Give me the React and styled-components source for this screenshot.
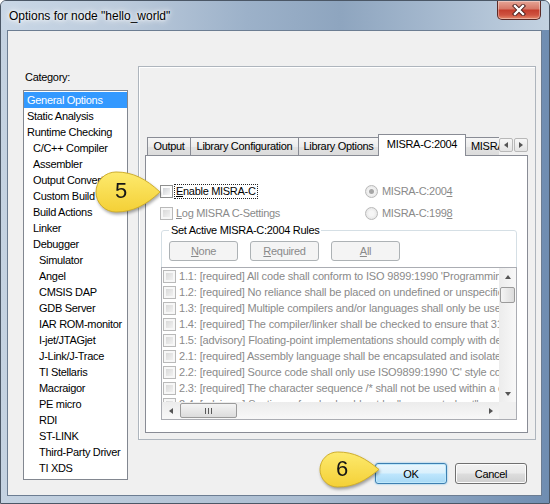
import React from 'react';
import styled, { createGlobalStyle, css } from 'styled-components';

const GlobalStyle = createGlobalStyle`
  html, body {
    margin: 0;
    padding: 0;
    background: #ffffff;
  }
  * {
    box-sizing: border-box;
  }
`;

const categories = [
  ['General Options', 0, true],
  ['Static Analysis', 0],
  ['Runtime Checking', 0],
  ['C/C++ Compiler', 1],
  ['Assembler', 1],
  ['Output Converter', 1],
  ['Custom Build', 1],
  ['Build Actions', 1],
  ['Linker', 1],
  ['Debugger', 1],
  ['Simulator', 2],
  ['Angel', 2],
  ['CMSIS DAP', 2],
  ['GDB Server', 2],
  ['IAR ROM-monitor', 2],
  ['I-jet/JTAGjet', 2],
  ['J-Link/J-Trace', 2],
  ['TI Stellaris', 2],
  ['Macraigor', 2],
  ['PE micro', 2],
  ['RDI', 2],
  ['ST-LINK', 2],
  ['Third-Party Driver', 2],
  ['TI XDS', 2]
];

const tabs = [
  { label: 'Output', width: 44 },
  { label: 'Library Configuration', width: 109 },
  { label: 'Library Options', width: 81 },
  { label: 'MISRA-C:2004', width: 88, active: true },
  { label: 'MISRA-C:1998', width: 44, clipped: true }
];

const rules = [
  "1.1: [required] All code shall conform to ISO 9899:1990 'Programming languages - C'",
  '1.2: [required] No reliance shall be placed on undefined or unspecified behaviour',
  '1.3: [required] Multiple compilers and/or languages shall only be used if',
  '1.4: [required] The compiler/linker shall be checked to ensure that 31 character',
  '1.5: [advisory] Floating-point implementations should comply with defined standard',
  '2.1: [required] Assembly language shall be encapsulated and isolated',
  "2.2: [required] Source code shall only use ISO9899:1990 'C' style comments",
  '2.3: [required] The character sequence /* shall not be used within a comment',
  '2.4: [advisory] Sections of code should not be "commented out"'
];

const Window = styled.div`
  position: relative;
  width: 550px;
  height: 504px;
  border: 1px solid #4b5766;
  border-radius: 6px 6px 0 0;
  background: linear-gradient(90deg, #c4d2e1 0%, #abbdd1 55%, #6f8db1 100%);
  padding: 0 7px 7px 6px;
  display: flex;
  flex-direction: column;
  overflow: hidden;
  font-family: 'Liberation Sans', Arial, sans-serif;
  font-size: 11px;
  letter-spacing: -0.3px;
  color: #000;
`;

const TitleBar = styled.div`
  height: 29px;
  margin: 0 -7px 0 -6px;
  padding: 0 8px;
  display: flex;
  justify-content: space-between;
  align-items: flex-start;
  background: linear-gradient(
    90deg,
    #c9d7e6 0%,
    #bccbdc 22%,
    #9cb1c9 45%,
    #8ea5bf 62%,
    #a9bcd1 82%,
    #c3d2e1 100%
  );
`;

const Title = styled.span`
  margin-top: 8px;
  line-height: 14px;
  font-size: 12px;
  letter-spacing: 0;
  text-shadow: 0 0 6px #fff, 0 0 10px #fff, 0 0 3px #fff;
`;

const CloseButton = styled.div`
  width: 44px;
  height: 19px;
  display: flex;
  align-items: center;
  justify-content: center;
  border: 1px solid #5b2a26;
  border-top: none;
  border-radius: 0 0 5px 5px;
  background: linear-gradient(#e6a596 0%, #d77a69 42%, #c53f2e 52%, #cf5340 78%, #e58a6c 100%);
  box-shadow: inset 0 0 0 1px rgba(255, 255, 255, 0.35);
`;

const Client = styled.div`
  flex: 1;
  min-height: 0;
  display: grid;
  grid-template-columns: 105px minmax(0, 1fr);
  column-gap: 10px;
  padding: 35px 5px 0 15px;
  border: 1px solid #6c7d92;
  background: #f0f0f0;
`;

const LeftColumn = styled.div`
  padding-top: 4px;
  display: flex;
  flex-direction: column;
`;

const CategoryLabel = styled.div`
  padding-left: 2px;
  line-height: 14px;
  height: 14px;
`;

const CategoryList = styled.div`
  margin-top: 6px;
  height: 390px;
  padding-top: 1px;
  border: 1px solid #828790;
  background: #fff;
  overflow: hidden;
`;

const CategoryItem = styled.div`
  height: 16px;
  line-height: 16px;
  white-space: nowrap;
  padding-left: ${(p) => 3 + p.$level * 6}px;
  ${(p) =>
    p.$selected &&
    css`
      background: #3399ff;
      color: #fff;
    `}
`;

const RightColumn = styled.div`
  min-width: 0;
  display: flex;
  flex-direction: column;
`;

const Panel = styled.div`
  height: 374px;
  min-width: 0;
  padding: 67px 7px 6px 6px;
  border: 1px solid #aeb5bd;
  box-shadow: inset 1px 1px 0 #fff;
  display: flex;
  flex-direction: column;
`;

const TabControl = styled.div`
  flex: 1;
  min-width: 0;
  display: flex;
  flex-direction: column;
`;

const TabStrip = styled.div`
  height: 22px;
  display: flex;
  margin-bottom: -1px;
  position: relative;
  z-index: 1;
`;

const TabRow = styled.div`
  flex: 1;
  min-width: 0;
  display: flex;
  align-items: flex-end;
  padding-left: 2px;
  overflow: hidden;
`;

const Tab = styled.div`
  flex: none;
  width: ${(p) => p.$width}px;
  margin-left: -1px;
  border: 1px solid #898c95;
  white-space: nowrap;
  overflow: hidden;
  text-align: ${(p) => (p.$clipped ? 'left' : 'center')};
  padding-left: ${(p) => (p.$clipped ? '5px' : '0')};
  line-height: 14px;
  ${(p) =>
    p.$active
      ? css`
          height: 22px;
          padding-top: 2px;
          border-bottom: none;
          background: #fff;
          position: relative;
          z-index: 2;
        `
      : css`
          height: 19px;
          padding-top: 1px;
          background: linear-gradient(#f6f6f6 0%, #ececec 50%, #e2e2e2 51%, #dcdcdc 100%);
        `}
  &:first-child {
    margin-left: 0;
  }
`;

const TabArrows = styled.div`
  display: flex;
  gap: 1px;
  align-self: flex-end;
  margin-bottom: 4px;
`;

const TabArrow = styled.div`
  width: 14px;
  height: 14px;
  display: flex;
  align-items: center;
  justify-content: center;
  border: 1px solid #b8b8b8;
  border-radius: 2px;
  background: linear-gradient(#f7f7f7, #e4e4e4);
`;

const TabPage = styled.div`
  flex: 1;
  min-width: 0;
  display: flex;
  flex-direction: column;
  padding: 26px 10px 0 14px;
  border: 1px solid #898c95;
  background: #fff;
`;

const OptionsGrid = styled.div`
  display: grid;
  grid-template-columns: 205px 1fr;
  grid-auto-rows: 18px;
  row-gap: 4px;
`;

const Option = styled.label`
  display: flex;
  align-items: center;
  gap: ${(p) => (p.$radio ? '4px' : '2px')};
  color: ${(p) => (p.$disabled ? '#8a8a8a' : '#000')};
  white-space: nowrap;
`;

const OptionText = styled.span`
  line-height: 13px;
  padding: 0 1px;
  outline: ${(p) => (p.$focus ? '1px dotted #222' : 'none')};
`;

const Key = styled.u`
  text-decoration: underline;
  text-underline-offset: 1px;
`;

const CheckBox = styled.span`
  width: 13px;
  height: 13px;
  flex: none;
  padding: 2px;
  border: 1px solid ${(p) => (p.$disabled ? '#b9b9b9' : '#8e8f8f')};
  background: ${(p) =>
    p.$disabled
      ? 'linear-gradient(135deg, #d9d9d9, #f1f1f1) content-box, #f7f7f7'
      : 'linear-gradient(135deg, #cfd2d6, #f8f8f8) content-box, #fdfdfd'};
`;

const RadioDot = styled.span`
  width: 13px;
  height: 13px;
  flex: none;
  border-radius: 50%;
  border: 1px solid #b9b9b9;
  background: radial-gradient(circle, #f6f6f6 30%, #dedede 100%);
  display: flex;
  align-items: center;
  justify-content: center;
  &::after {
    content: '';
    width: 5px;
    height: 5px;
    border-radius: 50%;
    background: ${(p) => (p.$checked ? '#a6a6a6' : 'transparent')};
  }
`;

const Group = styled.fieldset`
  margin: 1px 0 0 1px;
  padding: 0;
  border: 1px solid #d5dfe5;
  border-radius: 3px;
  min-width: 0;
`;

const Legend = styled.legend`
  margin-left: 7px;
  padding: 0 2px;
  line-height: 14px;
`;

const GroupButtons = styled.div`
  display: flex;
  gap: 12px;
  padding-left: 7px;
  margin-top: 4px;
`;

const FlatButton = styled.div`
  width: 69px;
  height: 20px;
  display: flex;
  align-items: center;
  justify-content: center;
  border: 1px solid #adb2b5;
  border-radius: 3px;
  background: #f4f4f4;
  color: #8a8a8a;
`;

const RuleList = styled.div`
  margin: 6px -1px -1px -1px;
  height: 153px;
  display: grid;
  grid-template-columns: minmax(0, 1fr) 17px;
  grid-template-rows: 134px 17px;
  border: 1px solid #abadb3;
  background: #fff;
`;

const RuleRows = styled.div`
  min-width: 0;
  overflow: hidden;
`;

const RuleRow = styled.div`
  height: 16px;
  display: flex;
  align-items: center;
  gap: 3px;
  padding-left: 1px;
  white-space: nowrap;
  letter-spacing: -0.15px;
  color: #8a8a8a;
`;

const ScrollBar = styled.div`
  min-width: 0;
  display: flex;
  flex-direction: ${(p) => (p.$vertical ? 'column' : 'row')};
  background: ${(p) =>
    p.$vertical
      ? 'linear-gradient(90deg, #ececec, #f8f8f8)'
      : 'linear-gradient(#ececec, #f8f8f8)'};
`;

const ScrollButton = styled.div`
  width: 17px;
  height: 17px;
  flex: none;
  display: flex;
  align-items: center;
  justify-content: center;
`;

const ScrollSpace = styled.div`
  flex: 1;
`;

const VThumb = styled.div`
  margin: 2px 1px 0 1px;
  height: 16px;
  border: 1px solid #9b9b9b;
  border-radius: 2px;
  background: linear-gradient(90deg, #f4f4f4, #dcdcdc);
`;

const HThumb = styled.div`
  margin: 1px 0 1px 1px;
  width: 57px;
  display: flex;
  align-items: center;
  justify-content: center;
  border: 1px solid #9b9b9b;
  border-radius: 2px;
  background: linear-gradient(#f4f4f4, #dcdcdc);
`;

const Grip = styled.span`
  width: 7px;
  height: 6px;
  background: repeating-linear-gradient(90deg, #5a5a5a 0 1px, transparent 1px 3px);
`;

const Corner = styled.div`
  background: #f0f0f0;
`;

const arrowShapes = {
  up: css`
    border-width: 0 3.5px 4px 3.5px;
    border-color: transparent transparent #555 transparent;
  `,
  down: css`
    border-width: 4px 3.5px 0 3.5px;
    border-color: #555 transparent transparent transparent;
  `,
  left: css`
    border-width: 3.5px 4px 3.5px 0;
    border-color: transparent #555 transparent transparent;
  `,
  right: css`
    border-width: 3.5px 0 3.5px 4px;
    border-color: transparent transparent transparent #555;
  `
};

const Arrow = styled.span`
  width: 0;
  height: 0;
  border-style: solid;
  ${(p) => arrowShapes[p.$dir]}
`;

const ButtonRow = styled.div`
  margin-top: 23px;
  display: flex;
  justify-content: flex-end;
  gap: 8px;
  padding-right: 9px;
`;

const DialogButton = styled.div`
  width: 72px;
  height: 21px;
  display: flex;
  align-items: center;
  justify-content: center;
  border-radius: 3px;
  ${(p) =>
    p.$default
      ? css`
          border: 1px solid #3c7fb1;
          background: linear-gradient(#eaf6fd 0%, #d9f0fc 48%, #bee6fd 52%, #a7d9f5 100%);
          box-shadow: inset 0 0 0 1px #bfe8fb, 0 0 2px #63b6e8;
        `
      : css`
          border: 1px solid #707070;
          background: linear-gradient(#f2f2f2 0%, #ebebeb 48%, #dddddd 52%, #cfcfcf 100%);
          box-shadow: inset 0 0 0 1px #fcfcfc;
        `}
`;

const CalloutWrap = styled.div`
  position: absolute;
  left: ${(p) => p.$x}px;
  top: ${(p) => p.$y}px;
  width: ${(p) => p.$w}px;
  height: ${(p) => p.$h}px;
  z-index: 10;
  filter: drop-shadow(1px 2px 1.5px rgba(0, 0, 0, 0.35));
`;

const CalloutShape = styled.svg`
  position: absolute;
  inset: 0;
  overflow: visible;
`;

const CalloutNumber = styled.span`
  position: absolute;
  left: ${(p) => p.$cx - 12}px;
  top: ${(p) => p.$cy - 12}px;
  width: 24px;
  height: 24px;
  line-height: 24px;
  text-align: center;
  font-size: 22px;
  letter-spacing: 0;
  color: #151515;
`;

const blobPath = (w, h) => {
  const r = h / 2;
  const c = r + 2;
  return `M${w} ${r} C${w - 14} ${r * 0.35} ${c + 17} 0 ${c} 0 A${r} ${r} 0 0 0 ${c} ${h} C${c + 17} ${h} ${w - 14} ${h - r * 0.35} ${w} ${r} Z`;
};

const Callout = ({ label, x, y, w, h, cx, cy }) => (
  <CalloutWrap $x={x} $y={y} $w={w} $h={h}>
    <CalloutShape width={w} height={h} viewBox={`0 0 ${w} ${h}`}>
      <defs>
        <linearGradient id={`callout-${label}`} x1="0" y1="0" x2="0" y2="1">
          <stop offset="0" stopColor="#fdea6e" />
          <stop offset="1" stopColor="#f4d036" />
        </linearGradient>
      </defs>
      <path d={blobPath(w, h)} fill={`url(#callout-${label})`} stroke="#cfae2c" strokeWidth="1" />
    </CalloutShape>
    <CalloutNumber $cx={cx} $cy={cy}>
      {label}
    </CalloutNumber>
  </CalloutWrap>
);

const CloseIcon = () => (
  <svg width="14" height="12" viewBox="0 0 14 12">
    <path d="M3 2 L11 10 M11 2 L3 10" stroke="#4a1d1a" strokeWidth="4.2" strokeLinecap="square" />
    <path d="M3 2 L11 10 M11 2 L3 10" stroke="#ffffff" strokeWidth="2.4" strokeLinecap="square" />
  </svg>
);

const App = () => {
  return (
    <>
      <GlobalStyle />
      <Window>
        <TitleBar>
          <Title>Options for node "hello_world"</Title>
          <CloseButton>
            <CloseIcon />
          </CloseButton>
        </TitleBar>
        <Client>
          <LeftColumn>
            <CategoryLabel>Category:</CategoryLabel>
            <CategoryList>
              {categories.map(([name, level, selected]) => (
                <CategoryItem key={name} $level={level} $selected={selected}>
                  {name}
                </CategoryItem>
              ))}
            </CategoryList>
          </LeftColumn>
          <RightColumn>
            <Panel>
              <TabControl>
                <TabStrip>
                  <TabRow>
                    {tabs.map((t) => (
                      <Tab key={t.label} $width={t.width} $active={t.active} $clipped={t.clipped}>
                        {t.label}
                      </Tab>
                    ))}
                  </TabRow>
                  <TabArrows>
                    <TabArrow>
                      <Arrow $dir="left" />
                    </TabArrow>
                    <TabArrow>
                      <Arrow $dir="right" />
                    </TabArrow>
                  </TabArrows>
                </TabStrip>
                <TabPage>
                  <OptionsGrid>
                    <Option>
                      <CheckBox />
                      <OptionText $focus>
                        <Key>E</Key>nable MISRA-C
                      </OptionText>
                    </Option>
                    <Option $radio $disabled>
                      <RadioDot $checked />
                      <span>
                        MISRA-C:200<Key>4</Key>
                      </span>
                    </Option>
                    <Option $disabled>
                      <CheckBox $disabled />
                      <OptionText>
                        <Key>L</Key>og MISRA C-Settings
                      </OptionText>
                    </Option>
                    <Option $radio $disabled>
                      <RadioDot />
                      <span>
                        MISRA-C:199<Key>8</Key>
                      </span>
                    </Option>
                  </OptionsGrid>
                  <Group>
                    <Legend>Set Active MISRA-C:2004 Rules</Legend>
                    <GroupButtons>
                      <FlatButton>
                        <span>
                          <Key>N</Key>one
                        </span>
                      </FlatButton>
                      <FlatButton>
                        <span>
                          <Key>R</Key>equired
                        </span>
                      </FlatButton>
                      <FlatButton>
                        <span>
                          <Key>A</Key>ll
                        </span>
                      </FlatButton>
                    </GroupButtons>
                    <RuleList>
                      <RuleRows>
                        {rules.map((r) => (
                          <RuleRow key={r}>
                            <CheckBox $disabled />
                            <span>{r}</span>
                          </RuleRow>
                        ))}
                      </RuleRows>
                      <ScrollBar $vertical>
                        <ScrollButton>
                          <Arrow $dir="up" />
                        </ScrollButton>
                        <VThumb />
                        <ScrollSpace />
                        <ScrollButton>
                          <Arrow $dir="down" />
                        </ScrollButton>
                      </ScrollBar>
                      <ScrollBar>
                        <ScrollButton>
                          <Arrow $dir="left" />
                        </ScrollButton>
                        <HThumb>
                          <Grip />
                        </HThumb>
                        <ScrollSpace />
                        <ScrollButton>
                          <Arrow $dir="right" />
                        </ScrollButton>
                      </ScrollBar>
                      <Corner />
                    </RuleList>
                  </Group>
                </TabPage>
              </TabControl>
            </Panel>
            <ButtonRow>
              <DialogButton $default>OK</DialogButton>
              <DialogButton>Cancel</DialogButton>
            </ButtonRow>
          </RightColumn>
        </Client>
        <Callout label="5" x={93} y={171} w={66} h={40} cx={27} cy={19} />
        <Callout label="6" x={317} y={451} w={61} h={35} cx={24} cy={17} />
      </Window>
    </>
  );
};

export default App;
